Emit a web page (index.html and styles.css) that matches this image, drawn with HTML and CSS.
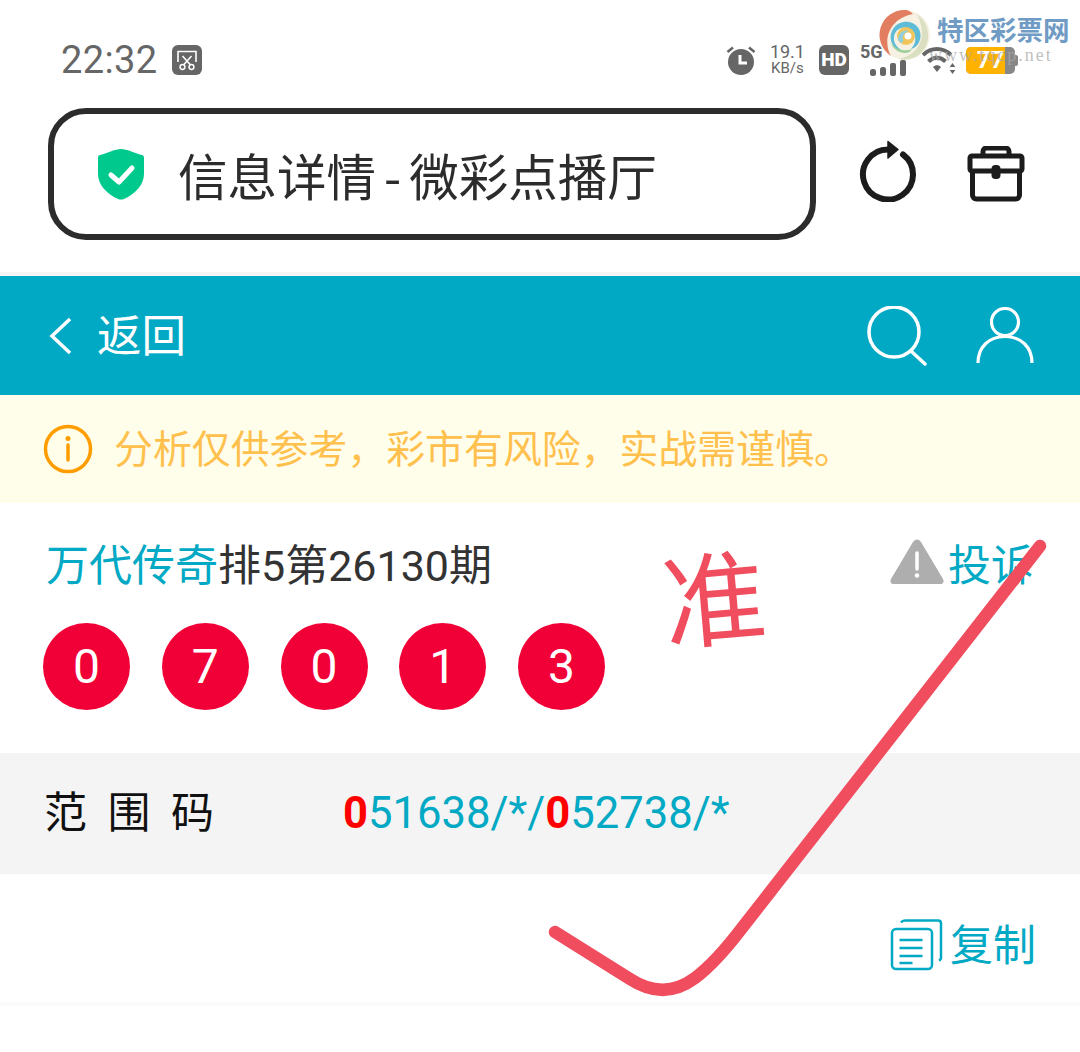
FILE: index.html
```html
<!DOCTYPE html>
<html lang="zh-CN">
<head>
    <meta charset="UTF-8">
    <meta name="viewport" content="width=device-width, initial-scale=1.0">
    <title>信息详情-微彩点播厅</title>
    <link rel="stylesheet" href="styles.css">
</head>
<body>
    <div class="page">
        <!-- status bar -->
        <div class="status">
            <div class="status-left">
                <span class="time">22:32</span>
                <svg class="shot" width="30" height="30" viewBox="0 0 30 30">
                    <rect width="30" height="30" rx="6" fill="#666"/>
                    <path d="M6 17V6.500h18V17" fill="none" stroke="#fff" stroke-width="1.600"/>
                    <path d="M10.500 11l8 9M19.500 11l-8 9" stroke="#fff" stroke-width="1.600"/>
                    <circle cx="10.500" cy="22" r="2.400" fill="none" stroke="#fff" stroke-width="1.500"/>
                    <circle cx="19.500" cy="22" r="2.400" fill="none" stroke="#fff" stroke-width="1.500"/>
                </svg>
            </div>
            <div class="status-right">
                <svg class="alarm" width="30" height="30" viewBox="0 0 30 30">
                    <circle cx="15" cy="17" r="13" fill="#666"/>
                    <path d="M1.500 7L7 2.500M28.500 7L23 2.500" stroke="#666" stroke-width="2.600" fill="none"/>
                    <path d="M14 10v8h7" stroke="#fff" stroke-width="3" fill="none"/>
                </svg>
                <div class="speed"><span class="speed-num">19.1</span><span class="speed-unit">KB/s</span></div>
                <div class="hd">HD</div>
                <div class="signal">
                    <span class="five-g">5G</span>
                    <svg width="36" height="16" viewBox="0 0 36 16">
                        <rect x="0" y="9" width="6" height="7" rx="2.500" fill="#666"/>
                        <rect x="10" y="7" width="6" height="9" rx="2.500" fill="#666"/>
                        <rect x="20" y="3" width="6" height="13" rx="2" fill="#666"/>
                        <rect x="30" y="0" width="6" height="16" rx="2" fill="#666"/>
                    </svg>
                </div>
                <svg class="wifi" width="36" height="30" viewBox="0 0 36 30">
                    <path d="M1 10C9 2 21 2 29 10" fill="none" stroke="#666" stroke-width="4"/>
                    <path d="M6.500 16.500C11.500 11.500 18.500 11.500 23.500 16.500" fill="none" stroke="#666" stroke-width="4"/>
                    <path d="M11 22c2.500-2.500 5.500-2.500 8 0l-4 5z" fill="#666"/>
                    <path d="M30.500 18l2.800 4h-5.600zM30.500 29l2.800-4h-5.600z" fill="#666"/>
                </svg>
                <div class="battery">
                    <div class="battery-body"><div class="battery-fill"></div><span class="battery-num">77</span></div>
                    <div class="battery-tip"></div>
                </div>
            </div>
        </div>

        <!-- browser address row -->
        <div class="browser-row">
            <div class="address">
                <svg class="shield" width="48" height="52" viewBox="0 0 48 52">
                    <path d="M24 1C30 1 37 5 45 7c1 .3 2 1 2 3v16c0 11-9 20-20 25-2 .8-4 .8-6 0C10 46 1 37 1 26V10c0-2 1-2.700 2-3 8-2 15-6 21-6z" fill="#00c98d"/>
                    <path d="M14 27l8 7 13-14" fill="none" stroke="#fff" stroke-width="5" stroke-linecap="round" stroke-linejoin="round"/>
                </svg>
                <span class="address-text">信息详情<span class="dash">-</span>微彩点播厅</span>
            </div>
            <svg class="refresh" width="58" height="62" viewBox="0 0 58 62">
                <path d="M44 14.500A25 25 0 1 1 29 9.500" fill="none" stroke="#1c1c1c" stroke-width="6" stroke-linecap="round"/>
                <path d="M29 1.500l10 8-10 8.500z" fill="#1c1c1c" stroke="#1c1c1c" stroke-width="1.500" stroke-linejoin="round"/>
            </svg>
            <svg class="toolbox" width="58" height="56" viewBox="0 0 58 56">
                <path d="M16 10V5.500C16 3.500 17.500 2 19.500 2h19C40.500 2 42 3.500 42 5.500V10" fill="none" stroke="#1c1c1c" stroke-width="5"/>
                <rect x="3" y="10" width="52" height="15" rx="2" fill="none" stroke="#1c1c1c" stroke-width="5"/>
                <path d="M5.500 25v24c0 2 1.500 4 4 4h39c2.500 0 4-2 4-4V25" fill="none" stroke="#1c1c1c" stroke-width="5"/>
                <rect x="24.500" y="19" width="9" height="14" rx="4" fill="#1c1c1c"/>
            </svg>
        </div>

        <!-- teal nav -->
        <div class="nav">
            <div class="nav-back">
                <svg width="26" height="38" viewBox="0 0 26 38"><path d="M22 2L4 19l18 17" fill="none" stroke="#fff" stroke-width="3.500"/></svg>
                <span class="nav-label">返回</span>
            </div>
            <div class="nav-icons">
                <svg width="60" height="60" viewBox="0 0 60 60">
                    <circle cx="27" cy="26" r="25" fill="none" stroke="#fff" stroke-width="3.500"/>
                    <path d="M44 45l14 13" stroke="#fff" stroke-width="3.500" stroke-linecap="round"/>
                </svg>
                <svg width="58" height="58" viewBox="0 0 58 58">
                    <circle cx="29" cy="15" r="13.500" fill="none" stroke="#fff" stroke-width="3.200"/>
                    <path d="M2 56C2 40 13 29.500 29 29.500S56 40 56 56" fill="none" stroke="#fff" stroke-width="3.200"/>
                </svg>
            </div>
        </div>

        <!-- risk notice -->
        <div class="notice">
            <svg width="50" height="50" viewBox="0 0 50 50">
                <circle cx="25" cy="25" r="22.500" fill="none" stroke="#ff9d00" stroke-width="3.500"/>
                <circle cx="25" cy="14.500" r="2.500" fill="#ff9d00"/>
                <path d="M25 21v15" stroke="#ff9d00" stroke-width="3.500" stroke-linecap="round"/>
            </svg>
            <span class="notice-text">分析仅供参考，彩市有风险，实战需谨慎。</span>
        </div>

        <!-- draw info -->
        <div class="draw">
            <div class="draw-head">
                <div class="draw-title"><span class="author">万代传奇</span>排5第26130期</div>
                <div class="report">
                    <svg width="56" height="46" viewBox="0 0 56 46">
                        <path d="M24 3c2-3.500 6-3.500 8 0l22 37c1.500 3 0 5-3 5H5c-3 0-4.500-2-3-5z" fill="#aeaeae"/>
                        <path d="M28 14v16" stroke="#fff" stroke-width="3.500" stroke-linecap="round"/>
                        <circle cx="28" cy="36.500" r="2.300" fill="#fff"/>
                    </svg>
                    <span>投诉</span>
                </div>
            </div>
            <div class="balls">
                <span class="ball">0</span>
                <span class="ball">7</span>
                <span class="ball">0</span>
                <span class="ball">1</span>
                <span class="ball">3</span>
            </div>
        </div>

        <!-- range code -->
        <div class="range">
            <div class="range-label"><span>范</span><span>围</span><span>码</span></div>
            <div class="range-code"><b>0</b>51638/*/<b>0</b>52738/*</div>
        </div>

        <!-- copy -->
        <div class="copy-row">
            <div class="copy">
                <svg width="54" height="52" viewBox="0 0 54 52">
                    <rect x="2" y="10" width="40" height="40" rx="4" fill="none" stroke="#02a9c4" stroke-width="2.500"/>
                    <path d="M11 3.500C12 2 13 1.500 15 1.500h33c2 0 3 1 3 3v34c0 1.500-.7 2.500-2 3" fill="none" stroke="#02a9c4" stroke-width="2.500"/>
                    <path d="M9.500 21h23M9.500 29h23M9.500 37h23M9.500 44h13" stroke="#02a9c4" stroke-width="2.500"/>
                </svg>
                <span>复制</span>
            </div>
        </div>

        <!-- site watermark -->
        <div class="watermark">
            <svg class="swirl" width="52" height="52" viewBox="0 0 52 52">
                <circle cx="26" cy="26" r="25" fill="#f6f1e2"/>
                <path d="M27 1A25 25 0 0 0 12 47C4 34 8 10 34 5 32 3 30 1.500 27 1z" fill="#e27d5f"/>
                <path d="M38 5C50 14 53 30 44 42 38 49 28 52 20 50 32 48 44 38 43 22 42 14 40 9 38 5z" fill="#d9dfc0"/>
                <path d="M26 42C14 42 8 30 14 20 20 11 34 10 40 20 44 28 40 38 32 40 38 34 38 24 31 20 24 16 16 20 15 28 14 35 20 41 26 42z" fill="#5fbcd6"/>
                <path d="M26 44C20 44 14 40 12 34 17 41 26 43 33 40 31 43 29 44 26 44z" fill="#9ccf9a"/>
                <circle cx="27" cy="27" r="9" fill="#f2c45c"/>
                <path d="M19 31C19 24 25 20 30 22 26 23 23 26 24 31 25 34 22 35 19 31z" fill="#8fd0e0"/>
                <circle cx="29" cy="27" r="3.500" fill="#fff"/>
            </svg>
            <div class="wm-text">
                <span class="wm-name">特区彩票网</span>
                <span class="wm-url">www.tqcp.net</span>
            </div>
        </div>

        <!-- hand-written marks over the page -->
        <span class="mark-char">准</span>
        <svg class="mark-tick" width="1080" height="1052" viewBox="0 0 1080 1052">
            <path d="M555 932L630 979C650 992 672 995 695 978 711 966 726 949 742 928L1040 546" fill="none" stroke="#f04d5e" stroke-width="12.500" stroke-linecap="round" stroke-linejoin="round"/>
        </svg>
    </div>
</body>
</html>
```

FILE: styles.css
```css
body {
    margin: 0;
    background-color: #fff;
    font-family: Roboto, "Noto Sans CJK SC", sans-serif;
}
.page {
    position: relative;
    width: 1080px;
    height: 1052px;
    overflow: hidden;
    background: #fff;
}

/* status bar */
.status {
    height: 108px;
    box-sizing: border-box;
    padding: 12px 62px 0 61px;
    display: flex;
    align-items: center;
    justify-content: space-between;
    color: #666;
}
.status-left {
    display: flex;
    align-items: center;
    gap: 14px;
}
.time {
    font-size: 38px;
    letter-spacing: 0.4px;
}
.status-right {
    display: flex;
    align-items: center;
}
.alarm {
    margin-right: 14px;
}
.speed {
    display: flex;
    flex-direction: column;
    align-items: center;
    line-height: 16px;
    margin-right: 14px;
}
.speed-num {
    font-size: 18px;
}
.speed-unit {
    font-size: 15px;
}
.hd {
    width: 30px;
    height: 30px;
    background: #666;
    color: #fff;
    border-radius: 6px;
    font-size: 19px;
    font-weight: 900;
    line-height: 30px;
    text-align: center;
    margin-right: 11px;
}
.signal {
    display: flex;
    flex-direction: column;
    align-items: flex-start;
    margin-right: 14px;
    width: 48px;
}
.signal svg {
    margin-left: 10px;
}
.five-g {
    font-size: 18px;
    font-weight: 700;
    line-height: 16px;
}
.wifi {
    margin-right: 8px;
}
.battery {
    display: flex;
    align-items: center;
}
.battery-body {
    position: relative;
    width: 49px;
    height: 27px;
    background: #888;
    border-radius: 5px;
    overflow: hidden;
    text-align: center;
    color: #fff;
    font-size: 24px;
    font-weight: 700;
    line-height: 27px;
}
.battery-fill {
    position: absolute;
    left: 0;
    top: 0;
    bottom: 0;
    width: 39px;
    background: #ffb200;
}
.battery-num {
    position: relative;
}
.battery-tip {
    width: 3px;
    height: 11px;
    background: #888;
    border-radius: 0 2px 2px 0;
}

/* address row */
.browser-row {
    height: 168px;
    box-sizing: border-box;
    padding: 0 55px 36px 48px;
    display: flex;
    align-items: flex-start;
    border-bottom: 4px solid #f5f5f5;
}
.address {
    flex-shrink: 0;
    width: 768px;
    height: 132px;
    box-sizing: border-box;
    border: 6px solid #2c2c2c;
    border-radius: 38px;
    display: flex;
    align-items: center;
    padding-left: 43px;
}
.shield {
    margin-right: 33px;
}
.address-text {
    font-size: 49.500px;
    color: #2c2c2c;
    line-height: 60px;
    padding-top: 5px;
}
.dash {
    font-family: "Noto Sans CJK SC", sans-serif;
    padding: 0 8px;
}
.refresh {
    flex-shrink: 0;
    margin: 32px 0 0 43px;
}
.toolbox {
    flex-shrink: 0;
    margin: 38px 0 0 50px;
}

/* teal nav */
.nav {
    height: 119px;
    background-color: #02a9c4;
    display: flex;
    align-items: center;
    justify-content: space-between;
    padding: 0 46px 0 48px;
    color: #fff;
}
.nav-back {
    display: flex;
    align-items: center;
    gap: 23px;
    font-size: 44.500px;
}
.nav-label {
    padding-bottom: 7px;
}
.nav-icons {
    display: flex;
    align-items: center;
    gap: 49px;
}

/* notice */
.notice {
    height: 108px;
    background-color: #fffeea;
    display: flex;
    align-items: center;
    gap: 21px;
    padding-left: 43px;
    color: #ffc04d;
    font-size: 38.900px;
}
.notice-text {
    padding-bottom: 7px;
}

/* draw info */
.draw {
    height: 250px;
    box-sizing: border-box;
    padding: 31px 46px 0 43px;
}
.draw-head {
    display: flex;
    align-items: center;
    justify-content: space-between;
    height: 56px;
}
.draw-title {
    font-size: 43px;
    color: #333;
    padding-left: 3px;
}
.author {
    color: #02a9c4;
}
.report {
    display: flex;
    align-items: center;
    gap: 3px;
    font-size: 43px;
    color: #02a9c4;
}
.balls {
    display: flex;
    gap: 31.750px;
    margin-top: 33px;
}
.ball {
    width: 87px;
    height: 87px;
    border-radius: 50%;
    background-color: #f10037;
    color: #fff;
    font-size: 48px;
    line-height: 87px;
    text-align: center;
}

/* range row */
.range {
    height: 121px;
    background-color: #f4f4f4;
    display: flex;
    align-items: center;
    padding-left: 44px;
}
.range-label {
    width: 299px;
    display: flex;
    gap: 20.500px;
    font-size: 43px;
    color: #111;
    padding-bottom: 9px;
}
.range-code {
    font-size: 43.600px;
    color: #02a9c4;
}
.range-code b {
    color: #f00;
    font-weight: 700;
}

/* copy row */
.copy-row {
    height: 132px;
    box-sizing: border-box;
    border-bottom: 4px solid #fafafa;
    padding: 8px 44px 0 0;
    display: flex;
    align-items: center;
    justify-content: flex-end;
}
.copy {
    display: flex;
    align-items: center;
    gap: 6px;
    font-size: 43px;
    color: #02a9c4;
}
.copy svg {
    margin-top: 6px;
}

/* watermark in the corner */
.watermark {
    position: absolute;
    left: 879px;
    top: 9px;
    display: flex;
    gap: 6px;
}
.wm-text {
    display: flex;
    flex-direction: column;
}
.wm-name {
    font-size: 26.500px;
    font-weight: 700;
    color: #6f9bc4;
    line-height: 44px;
    white-space: nowrap;
}
.wm-url {
    font-family: "Liberation Serif", serif;
    font-size: 18px;
    letter-spacing: 2px;
    color: rgba(170, 170, 170, 0.75);
    line-height: 18px;
    margin: -7px 0 0 -8px;
    white-space: nowrap;
}

/* marks drawn on top */
.mark-char {
    position: absolute;
    left: 663px;
    top: 538px;
    font-size: 103px;
    line-height: 130px;
    color: #f04d5e;
    transform: rotate(-5deg);
}
.mark-tick {
    position: absolute;
    left: 0;
    top: 0;
}
```
